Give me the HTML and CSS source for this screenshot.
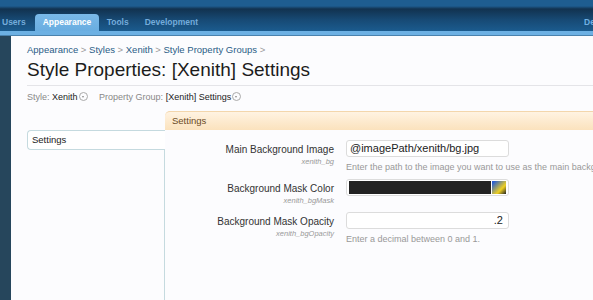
FILE: index.html
```html
<!DOCTYPE html>
<html lang="en">
<head>
<meta charset="UTF-8">
<title>Style Properties: [Xenith] Settings</title>
<link rel="stylesheet" href="styles.css">
</head>
<body>

<!-- Top navigation -->
<div class="topbar">
  <div class="tabs">
    <span class="tab">Users</span>
    <span class="tab active">Appearance</span>
    <span class="tab">Tools</span>
    <span class="tab">Development</span>
  </div>
  <span class="tab right">De</span>
</div>
<div class="tabstrip"></div>

<div class="page">
  <div class="sidestrip"></div>
  <div class="content">
    <div class="crumbs">
      <a>Appearance</a> &gt; <a>Styles</a> &gt; <a>Xenith</a> &gt; <a>Style Property Groups</a> &gt;
    </div>
    <h1>Style Properties: [Xenith] Settings</h1>

    <div class="meta">
      <span class="lbl">Style:</span> <b>Xenith</b><span class="drop"></span>
      <span class="lbl gap">Property Group:</span> <b>[Xenith] Settings</b><span class="drop"></span>
    </div>

    <div class="editor">
      <div class="sidebar">
        <div class="sidetab">Settings</div>
        <div class="siderest"></div>
      </div>
      <div class="main">
        <div class="panelhead">Settings</div>
        <div class="panelbody">
          <div class="row">
            <div class="label">Main Background Image<i>xenith_bg</i></div>
            <div class="field">
              <div class="input">@imagePath/xenith/bg.jpg</div>
              <div class="help">Enter the path to the image you want to use as the main background image.</div>
            </div>
          </div>
          <div class="row">
            <div class="label">Background Mask Color<i>xenith_bgMask</i></div>
            <div class="field">
              <div class="input color"><span class="fill"></span><span class="swatch"></span></div>
            </div>
          </div>
          <div class="row">
            <div class="label">Background Mask Opacity<i>xenith_bgOpacity</i></div>
            <div class="field">
              <div class="input num">.2</div>
              <div class="help">Enter a decimal between 0 and 1.</div>
            </div>
          </div>
        </div>
      </div>
    </div>
  </div>
</div>

</body>
</html>
```

FILE: styles.css
```css
body{margin:0;font-family:"Liberation Sans",Arial,sans-serif;background:#fcfcfe;color:#222;width:593px;height:300px;overflow:hidden}
/* Top nav */
.topbar{height:31px;display:flex;align-items:flex-end;justify-content:space-between;background:linear-gradient(#1e5d90 0,#1e5d90 6px,#12324f 9px,#174a75 20px,#1b5b8e 31px)}
.tabs{display:flex;align-items:flex-end;height:17px}
.tab{font-size:8.5px;font-weight:bold;color:#74acdb;padding:0 8px;line-height:17px}
.tab:first-child{padding-left:2px;padding-right:9px}
.tab.active{background:linear-gradient(#7ab9e9,#69ade0);color:#fff;border-radius:4px 4px 0 0;padding:0 8px;width:48px}
.tab.right{padding:0;width:9px;overflow:hidden;color:#6fb0e4}
.tabstrip{height:4px;background:#6cb0e3;border-bottom:1px solid #4a82ad}
/* Page */
.page{display:flex;height:264px}
.sidestrip{width:11px;background:#26465c}
.content{flex:1;padding:8px 0 0 16px}
.crumbs{font-size:9.5px;color:#999;line-height:12px}
.crumbs a{color:#2b5d86}
h1{margin:3px 0 0;font-size:19px;font-weight:normal;color:#1c1c1c;line-height:22px;padding-bottom:4px;border-bottom:1px solid #e4e4e8}
.meta{font-size:9px;line-height:12px;margin-top:5px;color:#222}
.meta .lbl{color:#888}
.meta .gap{margin-left:9px}
.meta b{font-weight:normal}
.drop{display:inline-block;width:7px;height:7px;border:1px solid #aaa;border-radius:50%;vertical-align:-1px;margin-left:1px;position:relative}
.drop:after{content:'';position:absolute;left:2px;top:3px;border-left:1.5px solid transparent;border-right:1.5px solid transparent;border-top:2px solid #888}
/* Editor */
.editor{display:flex;margin-top:8px;height:190px}
.sidebar{width:138px;display:flex;flex-direction:column;padding-top:19px}
.sidetab{height:18px;line-height:18px;font-size:9.5px;padding-left:4px;border:1px solid #c5dadf;border-right:none;border-radius:4px 0 0 4px;background:#fff}
.siderest{flex:1;border-right:1px solid #c5dadf}
.main{flex:1}
.panelhead{height:18px;line-height:18px;font-size:9.5px;color:#6b4a24;padding-left:7px;background:linear-gradient(#fff3e2,#fbe2bd);border-top:1px solid #f3d6ac;border-radius:5px 0 0 0}
.panelbody{padding-top:10px}
.row{display:flex;gap:12px;margin-bottom:6px}
.label{width:169px;text-align:right;font-size:10px;line-height:13px;color:#333;padding-top:3px}
.label i{display:block;font-size:7.5px;color:#999;line-height:10px;padding-top:1px}
.field{width:163px}
.input{height:15px;border:1px solid #dcdcdc;border-radius:3px;background:#fff;font-size:11px;line-height:15px;padding:0 3px;color:#222}
.input.num{text-align:right;padding-right:5px}
.input.color{display:flex;align-items:center;padding:0 2px;gap:1px}
.fill{flex:1;height:13px;background:#222}
.swatch{width:14px;height:13px;background:linear-gradient(135deg,#2a5fd0 10%,#f0d020 65%,#222)}
.help{font-size:9px;color:#999;line-height:12px;margin-top:4px;white-space:nowrap}
```
